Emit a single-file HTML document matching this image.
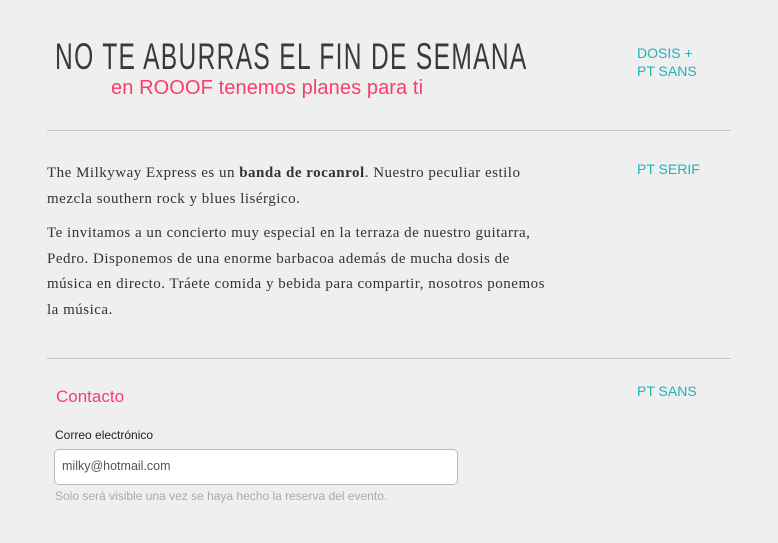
<!DOCTYPE html>
<html><head><meta charset="utf-8"><style>
body{margin:0;width:778px;height:543px;background:#efefef;position:relative;overflow:hidden;font-family:"Liberation Sans",sans-serif}
.a{position:absolute;white-space:nowrap}
.side{color:#1fb3b8;font-size:14px;line-height:18px}
hr{position:absolute;left:47px;width:684px;border:0;border-top:1px solid #c4c4c4;margin:0}
p{margin:0}
</style></head><body>
<div class="a" style="left:55px;top:36px;font-size:37px;color:#3a3a3a;letter-spacing:2px;transform-origin:0 0;transform:scaleX(0.664)">NO TE ABURRAS EL FIN DE SEMANA</div>
<div class="a" style="left:111px;top:77px;font-size:20px;color:#ff3b6b;letter-spacing:0.1px">en ROOOF tenemos planes para ti</div>
<div class="a side" style="left:637px;top:44px">DOSIS +<br>PT SANS</div>
<hr style="top:130px">
<div class="a side" style="left:637px;top:160px">PT SERIF</div>
<div class="a" style="left:47px;top:161px;width:500px;white-space:normal;font-family:'Liberation Serif',serif;font-size:15px;letter-spacing:0.5px;line-height:25.5px;color:#333">
<p style="margin-bottom:9px">The Milkyway Express es un <b>banda de rocanrol</b>. Nuestro peculiar estilo mezcla southern rock y blues lisérgico.</p>
<p>Te invitamos a un concierto muy especial en la terraza de nuestro guitarra, Pedro. Disponemos de una enorme barbacoa además de mucha dosis de música en directo. Tráete comida y bebida para compartir, nosotros ponemos la música.</p>
</div>
<hr style="top:358px">
<div class="a side" style="left:637px;top:382px">PT SANS</div>
<div class="a" style="left:56px;top:387px;font-size:17px;color:#ff3b6b">Contacto</div>
<div class="a" style="left:55px;top:428px;font-size:12px;color:#222">Correo electrónico</div>
<div class="a" style="left:54px;top:449px;width:402px;height:34px;background:#fff;border:1px solid #bbb;border-radius:5px"></div>
<div class="a" style="left:62px;top:459px;font-size:12.5px;color:#555">milky@hotmail.com</div>
<div class="a" style="left:55px;top:489px;font-size:12px;color:#aaa">Solo será visible una vez se haya hecho la reserva del evento.</div>
</body></html>
